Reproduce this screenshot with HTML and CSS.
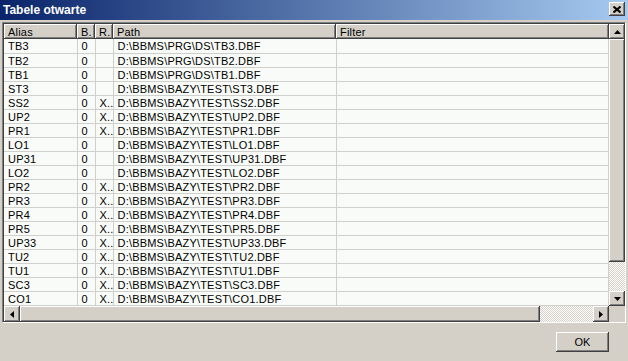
FILE: index.html
```html
<!DOCTYPE html>
<html lang="pl">
<head>
  <meta charset="UTF-8" />
  <title>Tabele otwarte</title>
  <link rel="stylesheet" href="styles.css">
</head>
<body>
  <div class="dialog">
    <div class="titlebar">
      <span class="title">Tabele otwarte</span>
      <button class="close-btn">
        <svg width="8" height="7" viewBox="0 0 8 7"><path d="M0.5 0.5 L7.5 6.5 M7.5 0.5 L0.5 6.5" stroke="#000" stroke-width="2"/></svg>
      </button>
    </div>

    <div class="grid-frame">
      <div class="grid-main">
        <table class="grid">
          <colgroup>
            <col style="width:73px"><col style="width:18px"><col style="width:18px"><col style="width:223px"><col>
          </colgroup>
          <thead>
            <tr><th>Alias</th><th>B.</th><th>R.</th><th>Path</th><th>Filter</th></tr>
          </thead>
          <tbody id="rows"></tbody>
        </table>
      </div>

      <div class="vscroll">
        <div class="sb-btn">
          <svg width="7" height="4" viewBox="0 0 7 4"><path d="M3.5 0 L7 4 L0 4 Z" fill="#000"/></svg>
        </div>
        <div class="sb-thumb v-thumb"></div>
        <div class="sb-track"></div>
        <div class="sb-btn">
          <svg width="7" height="4" viewBox="0 0 7 4"><path d="M0 0 L7 0 L3.5 4 Z" fill="#000"/></svg>
        </div>
      </div>

      <div class="hscroll">
        <div class="sb-btn">
          <svg width="4" height="7" viewBox="0 0 4 7"><path d="M4 0 L4 7 L0 3.5 Z" fill="#000"/></svg>
        </div>
        <div class="sb-thumb h-thumb"></div>
        <div class="sb-track"></div>
        <div class="sb-btn">
          <svg width="4" height="7" viewBox="0 0 4 7"><path d="M0 0 L4 3.5 L0 7 Z" fill="#000"/></svg>
        </div>
      </div>
      <div class="corner"></div>
    </div>

    <div class="footer">
      <button class="ok-btn">OK</button>
    </div>
  </div>

  <script>
    const data = [
      ["TB3", "0", "", "D:\\BBMS\\PRG\\DS\\TB3.DBF"],
      ["TB2", "0", "", "D:\\BBMS\\PRG\\DS\\TB2.DBF"],
      ["TB1", "0", "", "D:\\BBMS\\PRG\\DS\\TB1.DBF"],
      ["ST3", "0", "", "D:\\BBMS\\BAZY\\TEST\\ST3.DBF"],
      ["SS2", "0", "X..", "D:\\BBMS\\BAZY\\TEST\\SS2.DBF"],
      ["UP2", "0", "X..", "D:\\BBMS\\BAZY\\TEST\\UP2.DBF"],
      ["PR1", "0", "X..", "D:\\BBMS\\BAZY\\TEST\\PR1.DBF"],
      ["LO1", "0", "", "D:\\BBMS\\BAZY\\TEST\\LO1.DBF"],
      ["UP31", "0", "", "D:\\BBMS\\BAZY\\TEST\\UP31.DBF"],
      ["LO2", "0", "", "D:\\BBMS\\BAZY\\TEST\\LO2.DBF"],
      ["PR2", "0", "X..", "D:\\BBMS\\BAZY\\TEST\\PR2.DBF"],
      ["PR3", "0", "X..", "D:\\BBMS\\BAZY\\TEST\\PR3.DBF"],
      ["PR4", "0", "X..", "D:\\BBMS\\BAZY\\TEST\\PR4.DBF"],
      ["PR5", "0", "X..", "D:\\BBMS\\BAZY\\TEST\\PR5.DBF"],
      ["UP33", "0", "X..", "D:\\BBMS\\BAZY\\TEST\\UP33.DBF"],
      ["TU2", "0", "X..", "D:\\BBMS\\BAZY\\TEST\\TU2.DBF"],
      ["TU1", "0", "X..", "D:\\BBMS\\BAZY\\TEST\\TU1.DBF"],
      ["SC3", "0", "X..", "D:\\BBMS\\BAZY\\TEST\\SC3.DBF"],
      ["CO1", "0", "X..", "D:\\BBMS\\BAZY\\TEST\\CO1.DBF"]
    ];

    const tbody = document.getElementById("rows");
    data.forEach(row => {
      const tr = document.createElement("tr");
      [...row, ""].forEach(value => {
        const td = document.createElement("td");
        td.textContent = value;
        tr.appendChild(td);
      });
      tbody.appendChild(tr);
    });
  </script>
</body>
</html>
```

FILE: styles.css
```css
body {
  margin: 0;
  padding: 0;
  background: #d4d0c8;
  font-family: "Liberation Sans", Arial, sans-serif;
  font-size: 11px;
  color: #000;
}

.dialog {
  width: 628px;
  height: 361px;
  display: flex;
  flex-direction: column;
  background: #d4d0c8;
}

.titlebar {
  height: 20px;
  display: flex;
  align-items: center;
  justify-content: space-between;
  padding: 0 3px 0 3px;
  box-sizing: border-box;
  background: linear-gradient(to right, #0a246a, #a6caf0);
}

.title {
  color: #fff;
  font-weight: bold;
  font-size: 12px;
  margin-top: -1px;
}

.close-btn {
  width: 16px;
  height: 14px;
  padding: 0;
  margin-top: -2px;
  border: none;
  background: #d4d0c8;
  display: flex;
  align-items: center;
  justify-content: center;
  box-shadow: inset -1px -1px #404040, inset 1px 1px #fff, inset -2px -2px #808080;
}

/* grid with scrollbars */
.grid-frame {
  margin: 2px 2px 0 2px;
  height: 301px;
  box-sizing: border-box;
  border-top: 1px solid #808080;
  border-left: 1px solid #808080;
  border-right: 1px solid #fff;
  border-bottom: 1px solid #fff;
  box-shadow: inset 1px 1px #404040;
  padding: 1px 0 0 1px;
  display: grid;
  grid-template-columns: 1fr 16px;
  grid-template-rows: 1fr 16px;
  background: #d4d0c8;
}

.grid-main {
  overflow: hidden;
  background: #f8fbf7;
}

.grid {
  border-collapse: collapse;
  table-layout: fixed;
  width: 100%;
  letter-spacing: 0.2px;
}

.grid th {
  height: 15px;
  padding: 0 0 0 4px;
  box-sizing: border-box;
  text-align: left;
  font-weight: normal;
  line-height: 14px;
  background: #d4d0c8;
  box-shadow: inset -1px -1px #404040, inset 1px 1px #fff, inset -2px -2px #808080;
  white-space: nowrap;
  overflow: hidden;
}

.grid td {
  height: 14px;
  padding: 1px 0 0 4px;
  box-sizing: border-box;
  line-height: 12px;
  border-right: 1px solid #cfcfcb;
  border-bottom: 1px solid #cfcfcb;
  white-space: nowrap;
  overflow: hidden;
}

.vscroll {
  display: flex;
  flex-direction: column;
}

.hscroll {
  display: flex;
}

.sb-btn {
  width: 16px;
  height: 16px;
  flex: none;
  box-sizing: border-box;
  display: flex;
  align-items: center;
  justify-content: center;
  background: #d4d0c8;
  box-shadow: inset -1px -1px #404040, inset 1px 1px #fff, inset -2px -2px #808080;
}

.vscroll .sb-btn {
  height: 15px;
}

.sb-thumb {
  background: #d4d0c8;
  box-shadow: inset -1px -1px #404040, inset 1px 1px #fff, inset -2px -2px #808080;
}

.v-thumb {
  height: 223px;
}

.h-thumb {
  width: 520px;
}

.sb-track {
  flex: 1;
  background: repeating-conic-gradient(#fff 0 25%, #d4d0c8 0 50%) 0 0 / 2px 2px;
}

.corner {
  background: #d4d0c8;
}

.footer {
  display: flex;
  justify-content: flex-end;
  padding: 9px 19px 0 0;
}

.ok-btn {
  width: 53px;
  height: 20px;
  padding: 0;
  border: none;
  background: #d4d0c8;
  font-family: "Liberation Sans", Arial, sans-serif;
  font-size: 11px;
  color: #000;
  box-shadow: inset -1px -1px #404040, inset 1px 1px #fff, inset -2px -2px #808080;
}
```
